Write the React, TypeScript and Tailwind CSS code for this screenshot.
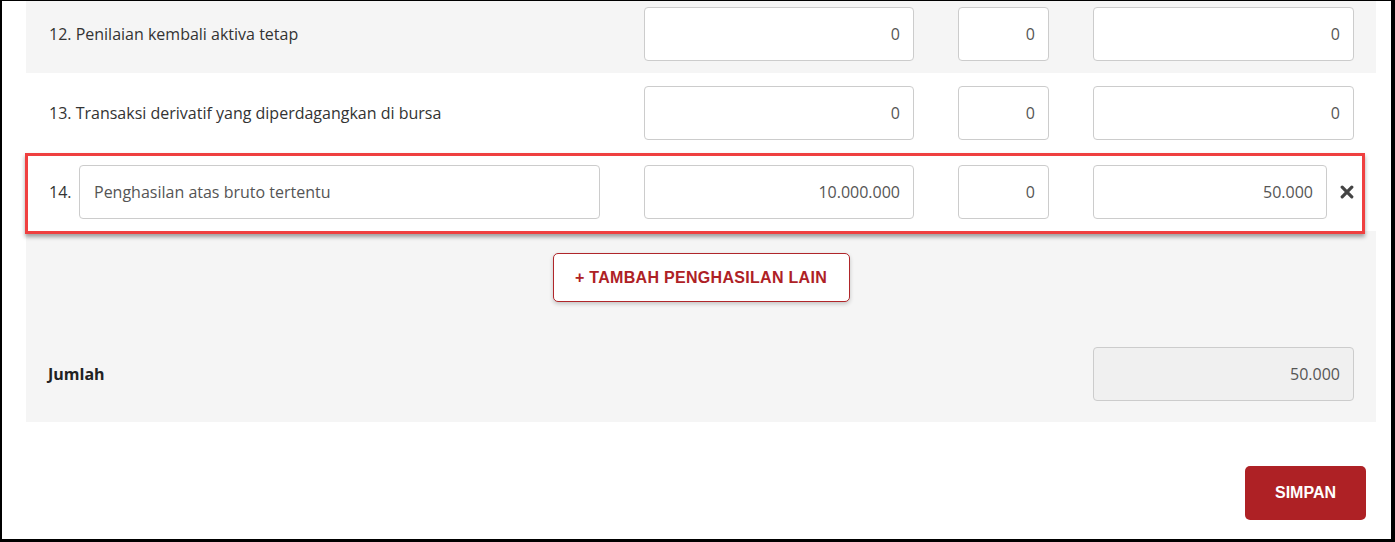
type Row = { no: number; label: string; a: string; b: string; c: string };

const rows: Row[] = [
  { no: 12, label: "Penilaian kembali aktiva tetap", a: "0", b: "0", c: "0" },
  { no: 13, label: "Transaksi derivatif yang diperdagangkan di bursa", a: "0", b: "0", c: "0" },
];

function NumInput({ value, width, disabled }: { value: string; width: string; disabled?: boolean }) {
  return (
    <div
      className={`${width} flex h-[54px] shrink-0 items-center justify-end rounded-[4px] border border-[#cccccc] px-[13px] text-[16px] text-[#555555] ${
        disabled ? "bg-[#f0f0f0]" : "bg-white"
      }`}
    >
      {value}
    </div>
  );
}

function RemoveIcon() {
  return (
    <svg className="ml-[13px] h-[14px] w-[14px] shrink-0" viewBox="0 0 14 14" fill="none">
      <path d="M2.2 2.2L11.8 11.8M11.8 2.2L2.2 11.8" stroke="#444444" strokeWidth="3.2" strokeLinecap="round" />
    </svg>
  );
}

export default function App() {
  return (
    <div
      className="flex h-[542px] w-[1395px] flex-col overflow-hidden border-t border-r-[4px] border-b-[3px] border-l-2 border-black bg-white"
      style={{ fontFamily: '"Open Sans", "Liberation Sans", sans-serif' }}
    >
      <div className="ml-[24px] w-[1350px] bg-[#f5f5f5]">
        {/* row 12 is cut off at the top */}
        <div className="flex h-[72px] items-start bg-[#f5f5f5] pt-[6px] pl-[23px] pr-[22px]">
          <div className="flex h-[54px] flex-1 items-center text-[16px] text-[#333333]">
            {rows[0].no}. {rows[0].label}
          </div>
          <div className="flex gap-[44px]">
            <NumInput value={rows[0].a} width="w-[270px]" />
            <NumInput value={rows[0].b} width="w-[91px]" />
            <NumInput value={rows[0].c} width="w-[261px]" />
          </div>
        </div>

        <div className="flex h-[79px] items-center bg-white pl-[23px] pr-[22px]">
          <div className="flex-1 text-[16px] text-[#333333]">
            {rows[1].no}. {rows[1].label}
          </div>
          <div className="flex gap-[44px]">
            <NumInput value={rows[1].a} width="w-[270px]" />
            <NumInput value={rows[1].b} width="w-[91px]" />
            <NumInput value={rows[1].c} width="w-[261px]" />
          </div>
        </div>

        <div className="relative flex h-[79px] items-center bg-white pl-[23px] pr-[22px]">
          <span className="w-[30px] text-[16px] text-[#333333]">14.</span>
          <div className="flex h-[54px] w-[521px] items-center rounded-[4px] border border-[#cccccc] bg-white px-[14px] text-[16px] text-[#555555]">
            Penghasilan atas bruto tertentu
          </div>
          <div className="ml-auto flex items-center gap-[44px]">
            <NumInput value="10.000.000" width="w-[270px]" />
            <NumInput value="0" width="w-[91px]" />
            <div className="flex items-center">
              <NumInput value="50.000" width="w-[234px]" />
              <RemoveIcon />
            </div>
          </div>
          <div className="pointer-events-none absolute top-[1px] -bottom-[3px] -left-[1px] right-[11px] border-[3px] border-[#ef4040] shadow-[0_3px_4px_rgba(0,0,0,0.35)]" />
        </div>

        <div className="flex flex-col pt-[22px] pb-[21px] pl-[22px] pr-[22px]">
          <div className="flex justify-center">
            <button
              type="button"
              className="h-[49px] w-[297px] rounded-[5px] border border-[#b0262a] bg-white text-[16px] font-bold tracking-[0.3px] text-[#ae2125] shadow-[0_2px_4px_rgba(0,0,0,0.2)]"
              style={{ fontFamily: '"Liberation Sans", Arial, sans-serif' }}
            >
              + TAMBAH PENGHASILAN LAIN
            </button>
          </div>
          <div className="mt-[45px] flex items-center">
            <span className="flex-1 text-[16px] font-bold text-[#222222]">Jumlah</span>
            <NumInput value="50.000" width="w-[261px]" disabled />
          </div>
        </div>
      </div>

      <div className="mt-[44px] flex justify-end pr-[25px]">
        <button
          type="button"
          className="h-[54px] w-[121px] rounded-[5px] bg-[#ae2125] text-[16px] font-bold text-white"
          style={{ fontFamily: '"Liberation Sans", Arial, sans-serif' }}
        >
          SIMPAN
        </button>
      </div>
    </div>
  );
}
